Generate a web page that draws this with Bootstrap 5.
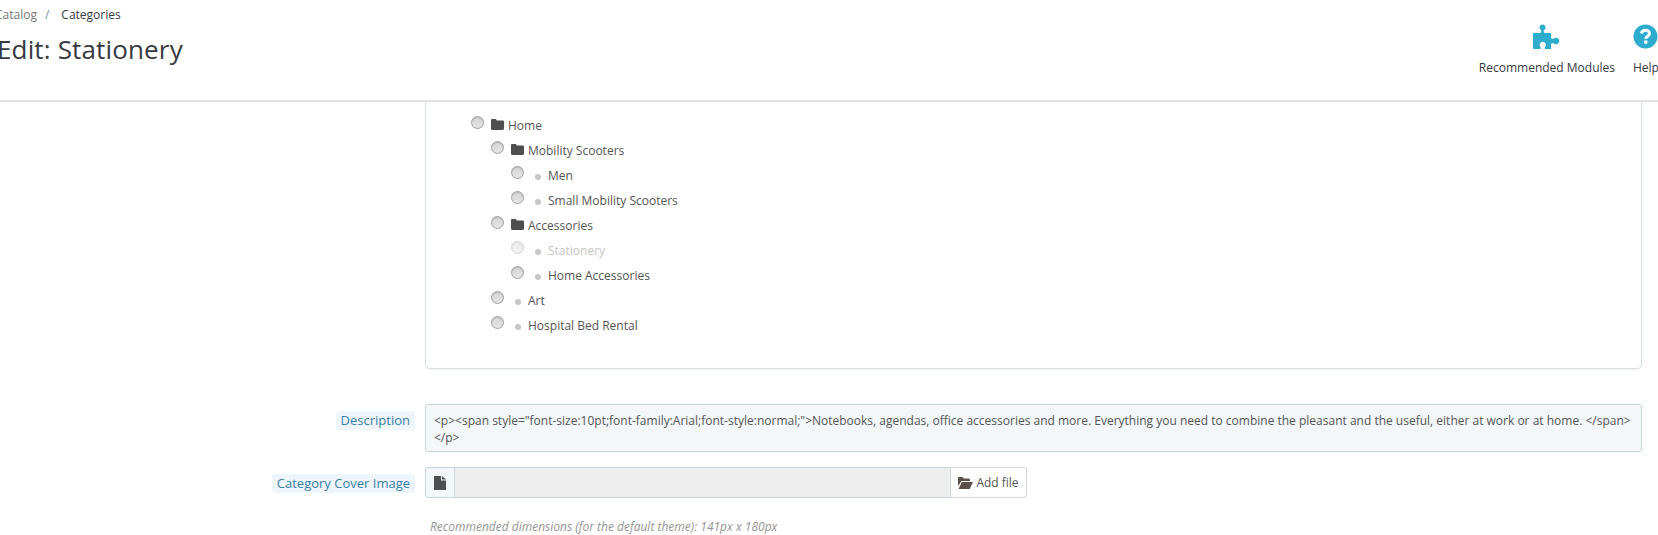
<!DOCTYPE html>
<html lang="en">
<head>
<meta charset="utf-8">
<title>Edit: Stationery</title>
<link rel="stylesheet" href="https://cdn.jsdelivr.net/npm/bootstrap@5.3.0/dist/css/bootstrap.min.css">
<style>
html,body{height:535px;overflow:hidden;background:#fff}
body{font-family:"Open Sans",sans-serif;font-size:12px;color:#555;line-height:17px}
.head-bar{height:102px;border-bottom:2px solid #e2e2e2;position:relative;z-index:2;background:#fff}
.head-left{margin-left:-5px;padding-top:6px}
.crumbs{margin:0;font-size:12px;line-height:17px;--bs-breadcrumb-divider-color:#6f93a8}
.crumbs .breadcrumb-item{color:#363a41}
.crumbs .breadcrumb-item+.breadcrumb-item{padding-left:8px}
.crumbs .breadcrumb-item+.breadcrumb-item::before{padding-right:12px}
.crumbs a{color:#777;text-decoration:none}
.page-name{font-size:26px;line-height:36px;font-weight:400;color:#363a41;margin:8px 0 0 2px;letter-spacing:.15px;font-family:"Open Sans",sans-serif}
.tool-link{color:#363a41;text-decoration:none;font-size:12px;line-height:17px;white-space:nowrap;text-align:center;display:block}
.tool-link svg{display:block;margin:0 auto 10px}
.tools{padding-top:24px;gap:18px}
.tool-help{width:25px;overflow:visible}
.form-line{display:flex}
.lab-col{width:415px;flex:none;display:flex;justify-content:flex-end;align-items:flex-start}
.fld-col{margin-left:10px;width:1217px;flex:none}
.tree-panel{height:267px;border:1px solid #d9e0e3;border-top:0;border-radius:0 0 5px 5px;box-shadow:0 1px 1px rgba(0,0,0,.06);padding:11px 0 0 45px}
.tree-row{height:25px;display:flex;align-items:center;color:#555}
.tree-row.lvl2{padding-left:20px}
.tree-row.lvl3{padding-left:40px}
.tree-row.off{color:#c4c4c4}
.tree-row.off .rad{opacity:.45}
.rad{width:13px;height:13px;border-radius:50%;border:1px solid #9f9f9f;background:linear-gradient(#d4d4d4,#e6e6e6);box-shadow:inset 0 1px 1px rgba(0,0,0,.12);flex:none;margin-top:-6px}
.fold{width:13px;height:11px;flex:none;margin-left:7px;margin-right:4px;margin-top:-2px}
.dot{width:6px;height:6px;border-radius:50%;background:#c6c6c6;flex:none;margin-left:11px;margin-right:7px;margin-top:2px}
.tag{background:#eff6fb;color:#3a80a8;padding:1px 5px;border-radius:3px;line-height:17px;font-size:13px}
.line-desc{margin-top:35px}
.line-desc .tag{margin-top:7px}
.desc-box{height:48px;background:#f3f7f9;border:1px solid #c7d6db;border-radius:3px;padding:7px 8px;color:#555}
.line-file{margin-top:15px}
.line-file .tag{margin-top:7px}
.file-grp{height:31px;width:602px;flex-wrap:nowrap}
.file-ico{width:30px;flex:none;background:#f3f7f9;border:1px solid #c7d6db;border-radius:3px 0 0 3px;display:flex;align-items:center;justify-content:center;padding:0}
.file-name{flex:1;background:#eee;border-top:1px solid #c7d6db;border-bottom:1px solid #c7d6db}
.file-btn{width:77px;flex:none;background:#fff;border:1px solid #d3d8db;border-left:1px solid #c7d6db;border-radius:0 3px 3px 0;color:#555;font-size:12px;line-height:17px;padding:0;display:flex;align-items:center;justify-content:center;gap:3px}
.hint-txt{margin:20px 0 0 5px;font-style:italic;color:#959595;font-size:12px;line-height:17px}
</style>
</head>
<body>
<header class="head-bar d-flex justify-content-between">
  <div class="head-left">
    <nav aria-label="breadcrumb">
      <ol class="breadcrumb crumbs">
        <li class="breadcrumb-item"><a href="#">Catalog</a></li>
        <li class="breadcrumb-item active">Categories</li>
      </ol>
    </nav>
    <h1 class="page-name">Edit: Stationery</h1>
  </div>
  <div class="tools d-flex align-items-start">
    <a class="tool-link" href="#">
      <svg width="27" height="25" viewBox="0 0 27 25"><path fill="#2eacce" d="M0 9H7C8.500 9 8.500 7 8 6A3 3 0 1 1 11 6C10.500 7 10.500 9 12 9H18V13.500C18 15 20 15 21 14.500A3.200 3.200 0 1 1 21 19.500C20 19 18 19 18 20.500V25H13C11.500 25 11.500 24 12 23A3 3 0 1 0 7.500 23C8 24 8 25 6.500 25H0Z"/></svg>
      Recommended Modules
    </a>
    <a class="tool-link tool-help" href="#">
      <svg width="25" height="25" viewBox="0 0 25 25"><circle cx="12.500" cy="12.500" r="12" fill="#2eacce"/><path d="M8.500 9.500c.3-2.200 2-3.300 4-3.300 2.300 0 4 1.400 4 3.300 0 2.700-3.700 2.700-3.700 5.200" fill="none" stroke="#fff" stroke-width="3"/><rect x="11.200" y="16.500" width="3.200" height="3.200" fill="#fff"/></svg>
      Help
    </a>
  </div>
</header>

<main>
  <div class="form-line">
    <div class="lab-col"></div>
    <div class="fld-col">
      <div class="tree-panel">
        <div class="tree-row lvl1"><span class="rad"></span><svg class="fold" viewBox="0 0 13 11"><path fill="#4f4f4f" d="M0 1.200C0 .5.500 0 1.200 0h3c.7 0 1.100.4 1.300 1l.3.600h6c.7 0 1.200.5 1.200 1.200v7C13 10.500 12.500 11 11.800 11H1.200C.5 11 0 10.500 0 9.800Z"/></svg>Home</div>
        <div class="tree-row lvl2"><span class="rad"></span><svg class="fold" viewBox="0 0 13 11"><path fill="#4f4f4f" d="M0 1.200C0 .5.500 0 1.200 0h3c.7 0 1.100.4 1.300 1l.3.600h6c.7 0 1.200.5 1.200 1.200v7C13 10.500 12.500 11 11.800 11H1.200C.5 11 0 10.500 0 9.800Z"/></svg>Mobility Scooters</div>
        <div class="tree-row lvl3"><span class="rad"></span><span class="dot"></span>Men</div>
        <div class="tree-row lvl3"><span class="rad"></span><span class="dot"></span>Small Mobility Scooters</div>
        <div class="tree-row lvl2"><span class="rad"></span><svg class="fold" viewBox="0 0 13 11"><path fill="#4f4f4f" d="M0 1.200C0 .5.500 0 1.200 0h3c.7 0 1.100.4 1.300 1l.3.600h6c.7 0 1.200.5 1.200 1.200v7C13 10.500 12.500 11 11.800 11H1.200C.5 11 0 10.500 0 9.800Z"/></svg>Accessories</div>
        <div class="tree-row lvl3 off"><span class="rad"></span><span class="dot"></span>Stationery</div>
        <div class="tree-row lvl3"><span class="rad"></span><span class="dot"></span>Home Accessories</div>
        <div class="tree-row lvl2"><span class="rad"></span><span class="dot"></span>Art</div>
        <div class="tree-row lvl2"><span class="rad"></span><span class="dot"></span>Hospital Bed Rental</div>
      </div>
    </div>
  </div>

  <div class="form-line line-desc">
    <div class="lab-col"><span class="tag">Description</span></div>
    <div class="fld-col">
      <div class="desc-box">&lt;p&gt;&lt;span style="font-size:10pt;font-family:Arial;font-style:normal;"&gt;Notebooks, agendas, office accessories and more. Everything you need to combine the pleasant and the useful, either at work or at home. &lt;/span&gt;&lt;/p&gt;</div>
    </div>
  </div>

  <div class="form-line line-file">
    <div class="lab-col"><span class="tag">Category Cover Image</span></div>
    <div class="fld-col">
      <div class="d-flex file-grp">
        <span class="file-ico"><svg width="12" height="14" viewBox="0 0 12 14"><path fill="#4f4f4f" d="M0 0h7v4.500h5V14H0Z"/><path fill="#4f4f4f" d="M8 0l4 3.500H8Z"/></svg></span>
        <span class="file-name"></span>
        <button type="button" class="btn file-btn"><svg width="15" height="12" viewBox="0 0 15 12"><path fill="#5c4f48" d="M0 1.200C0 .5.500 0 1.200 0h3.300l1.200 1.500h5c.7 0 1.200.5 1.200 1.200V4H3.500L0 9Z"/><path fill="#5c4f48" d="M3.800 5H15l-3.300 7H.6Z"/></svg>Add file</button>
      </div>
      <p class="hint-txt">Recommended dimensions (for the default theme): 141px x 180px</p>
    </div>
  </div>
</main>
</body>
</html>
